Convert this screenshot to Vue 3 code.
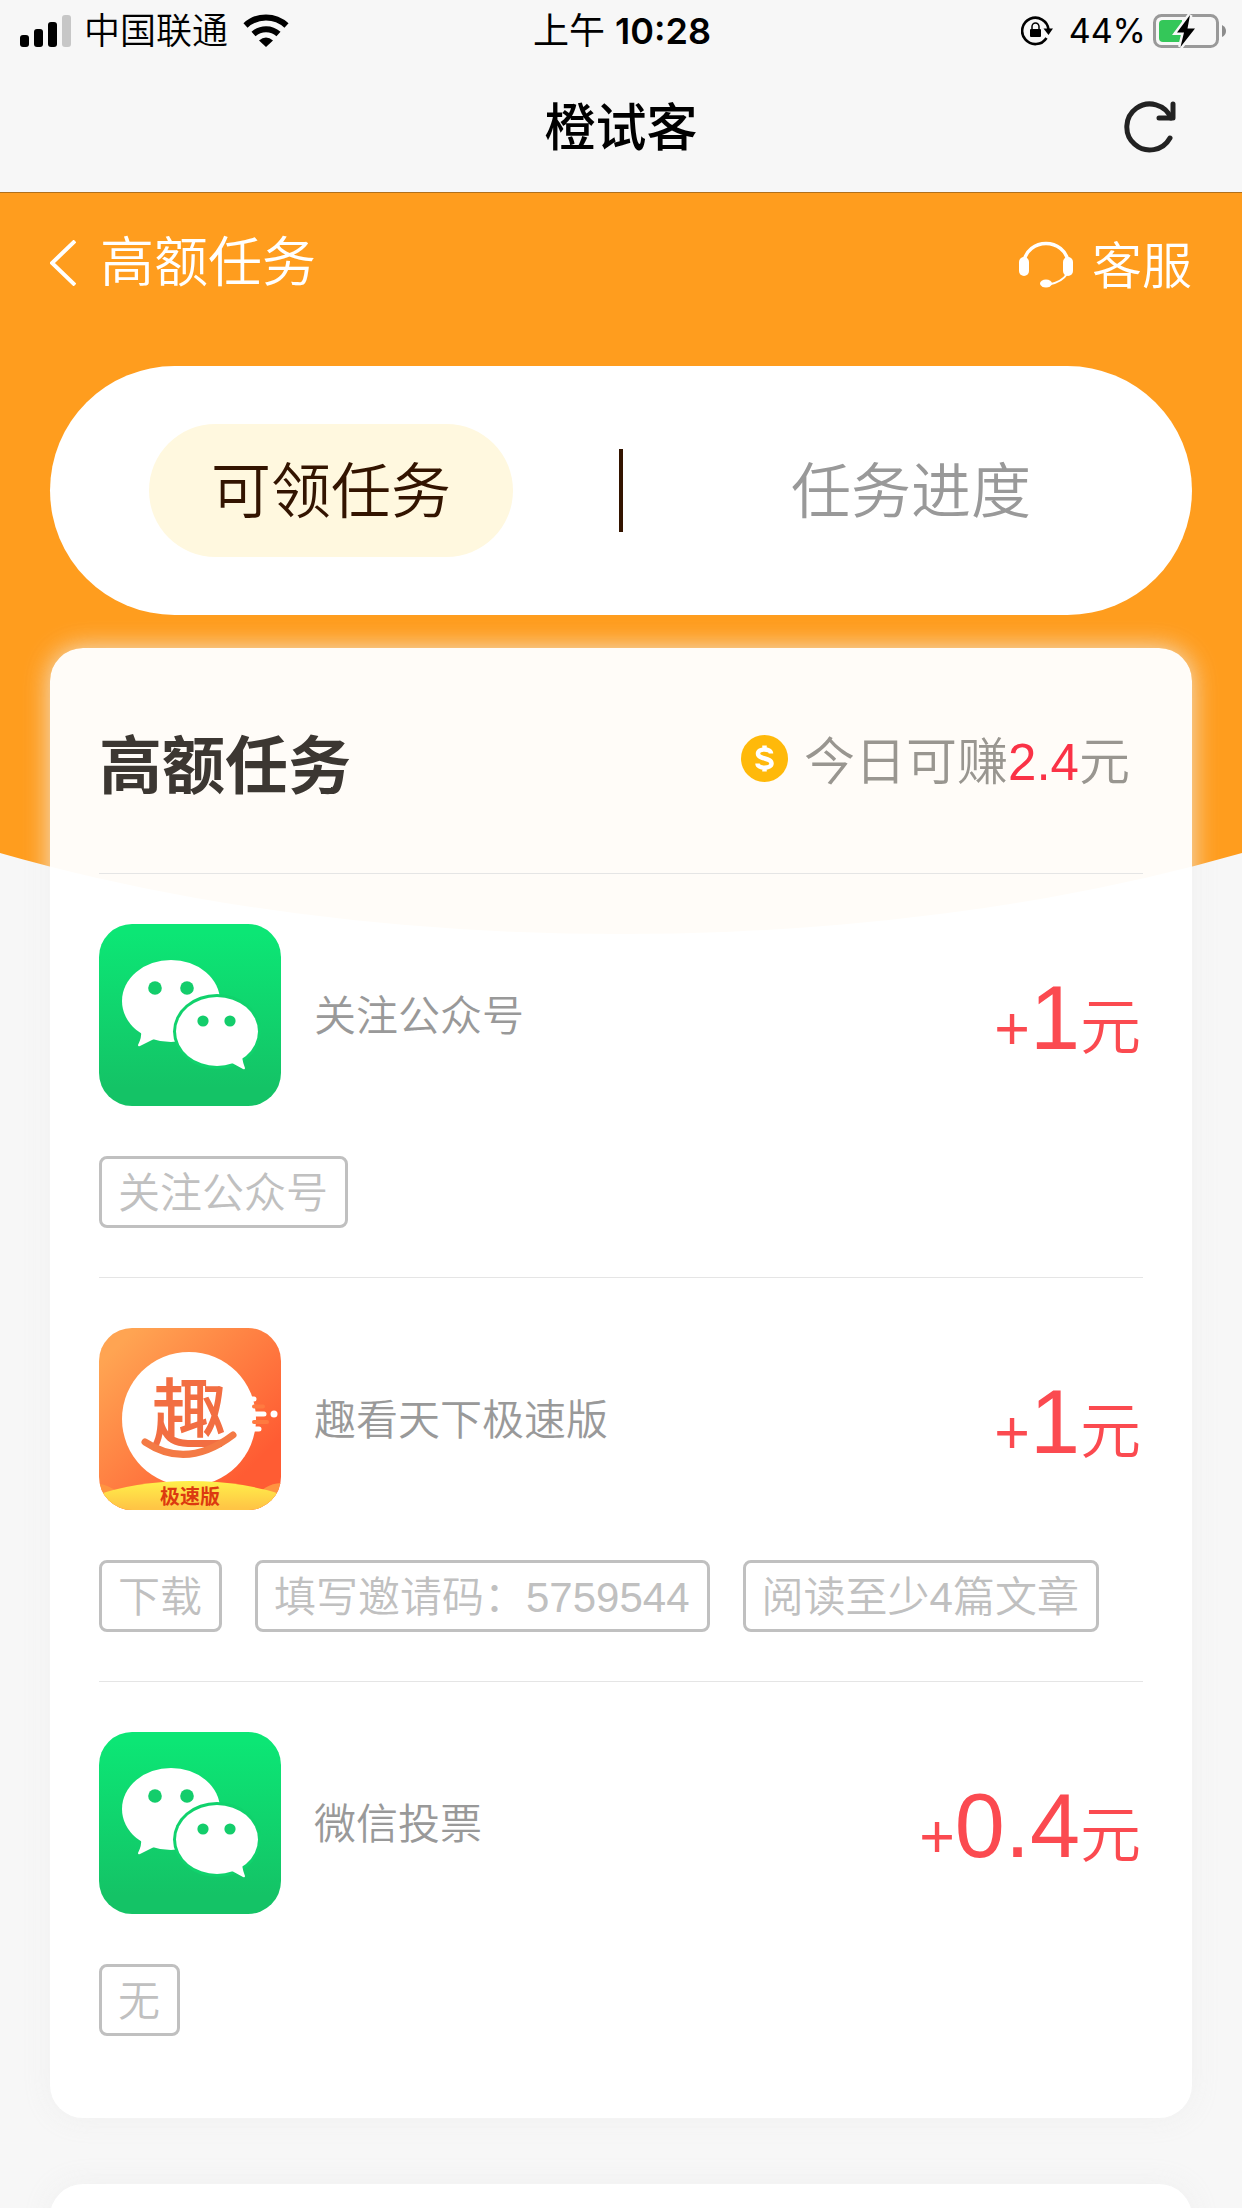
<script setup>
import { ref } from 'vue'

const activeTab = ref('available')
const tabs = [
  { id: 'available', label: '可领任务' },
  { id: 'progress', label: '任务进度' },
]
const tasks = [
  { name: '关注公众号', icon: 'wechat', reward: '1', tags: ['关注公众号'] },
  { name: '趣看天下极速版', icon: 'qu', reward: '1', tags: ['下载', '填写邀请码：5759544', '阅读至少4篇文章'] },
  { name: '微信投票', icon: 'wechat', reward: '0.4', tags: ['无'] },
]
</script>

<template>
  <div class="page">
    <header class="top">
      <div class="status">
        <div class="status-left">
          <svg class="signal" width="51" height="32" viewBox="0 0 51 32" aria-hidden="true">
            <rect x="0" y="20" width="9" height="12" rx="3" />
            <rect x="14" y="14" width="9" height="18" rx="3" />
            <rect x="28" y="7" width="9" height="25" rx="3" />
            <rect x="42" y="0" width="9" height="32" rx="3" fill="#c7c7c7" />
          </svg>
          <span class="carrier">中国联通</span>
          <svg width="46" height="34" viewBox="0 0 46 34" aria-hidden="true">
            <path d="M2.5 11.5A30 30 0 0 1 43.500 11.500" fill="none" stroke="#000" stroke-width="6" />
            <path d="M10.500 20A18.500 18.500 0 0 1 35.500 20" fill="none" stroke="#000" stroke-width="6" />
            <path d="M16 26.500Q23 20.500 30 26.500L23 33Z" />
          </svg>
        </div>
        <div class="clock">上午 <span>10:28</span></div>
        <div class="status-right">
          <svg width="32" height="30" viewBox="0 0 32 30" aria-hidden="true">
            <path d="M25.500 22A13.200 13.200 0 1 1 27.500 13.500" fill="none" stroke="#000" stroke-width="2.600" />
            <path d="M22.500 12.500H32L27.500 19Z" />
            <rect x="9" y="13" width="11" height="8" rx="1" />
            <path d="M11 13.500V10.500A3.500 3.500 0 0 1 18 10.500V13.500" fill="none" stroke="#000" stroke-width="1.500" />
          </svg>
          <span class="percent">44%</span>
          <svg class="battery" width="74" height="34" viewBox="0 0 74 34" aria-hidden="true">
            <rect x="1.500" y="1.500" width="63" height="31" rx="7" fill="none" stroke="#999" stroke-width="3" />
            <path d="M69 11Q73 13 73 17T69 23Z" fill="#8c8c8c" />
            <path d="M10 6H29V28H10Q6 28 6 24V10Q6 6 10 6Z" fill="#34c759" />
            <path d="M37 1L24 18.500H31L27.500 33L42 14.500H34.500Z" stroke="#f7f7f7" stroke-width="5" />
            <path d="M37 1L24 18.500H31L27.500 33L42 14.500H34.500Z" />
          </svg>
        </div>
      </div>
      <div class="title-bar">
        <h1>橙试客</h1>
        <button class="refresh" type="button" aria-label="刷新">
          <svg width="52" height="52" viewBox="0 0 52 52" aria-hidden="true">
            <path d="M46 37A23 23 0 1 1 47 17" />
            <path d="M49 3V17H35" />
          </svg>
        </button>
      </div>
    </header>

    <main class="body">
      <div class="backdrop" aria-hidden="true"></div>

      <nav class="nav">
        <button class="nav-btn back" type="button">
          <svg width="26" height="46" viewBox="0 0 26 46" aria-hidden="true">
            <path d="M25 1L2 23L25 45" fill="none" stroke="#fff" stroke-width="4" />
          </svg>
          <span>高额任务</span>
        </button>
        <button class="nav-btn service" type="button">
          <svg width="54" height="49" viewBox="0 0 54 49" aria-hidden="true">
            <path d="M5 22A22.300 21 0 0 1 49 22" fill="none" stroke="#fff" stroke-width="3.500" />
            <rect x="0" y="18" width="10" height="19" rx="5" fill="#fff" />
            <rect x="44" y="18" width="10" height="19" rx="5" fill="#fff" />
            <path d="M48 35Q43 43 30 45.500" fill="none" stroke="#fff" stroke-width="2" />
            <ellipse cx="27" cy="44.500" rx="6" ry="4" fill="#fff" />
          </svg>
          <span>客服</span>
        </button>
      </nav>

      <div class="tabs" role="tablist">
        <button
          v-for="tab in tabs"
          :key="tab.id"
          type="button"
          role="tab"
          class="tab"
          :class="{ active: activeTab === tab.id }"
          :aria-selected="activeTab === tab.id"
          @click="activeTab = tab.id"
        >{{ tab.label }}</button>
      </div>

      <section class="card">
        <div class="card-head">
          <h2>高额任务</h2>
          <p class="today">
            <svg width="47" height="47" viewBox="0 0 47 47" aria-hidden="true">
              <circle cx="23.500" cy="23.500" r="23.500" fill="#ffb90a" />
              <path d="M30 18.500C30 13 17 13 17 18.500C17 25 30.500 22 30.500 28.500C30.500 34 16.500 34 16.500 28.500M23.500 10.500V14M23.500 32V36.500" fill="none" stroke="#fff" stroke-width="4.500" />
            </svg>
            <span>今日可赚<strong>2.4</strong>元</span>
          </p>
        </div>

        <ul class="tasks">
          <li v-for="task in tasks" :key="task.name" class="task">
            <div class="task-main">
              <svg v-if="task.icon === 'wechat'" class="app-icon" viewBox="0 0 182 182" aria-hidden="true">
                <defs>
                  <linearGradient id="wechat-bg" x1="0" y1="0" x2="0" y2="1">
                    <stop offset="0.050" stop-color="#0ce675" />
                    <stop offset="0.900" stop-color="#14c366" />
                  </linearGradient>
                </defs>
                <rect width="182" height="182" fill="url(#wechat-bg)" />
                <g fill="#fff">
                  <ellipse cx="72" cy="77" rx="49" ry="41" />
                  <path d="M42 107Q43 113 39 121Q39 123 41 122L55 115Z" />
                </g>
                <ellipse cx="118" cy="107.500" rx="44" ry="37.500" fill="#10d26c" />
                <g fill="#fff">
                  <ellipse cx="118" cy="107.500" rx="41" ry="34.500" />
                  <path d="M143 133Q144 139 146 144Q146 146 144 145L133 139Z" />
                </g>
                <g fill="#13cd6b">
                  <circle cx="56" cy="64" r="6.800" />
                  <circle cx="88" cy="64" r="6.800" />
                  <circle cx="104" cy="97" r="5.600" />
                  <circle cx="131" cy="97" r="5.600" />
                </g>
              </svg>
              <svg v-else class="app-icon" viewBox="0 0 182 182" aria-hidden="true">
                <defs>
                  <linearGradient id="qu-bg" x1="0" y1="0" x2="1" y2="1">
                    <stop offset="0.100" stop-color="#ffa452" />
                    <stop offset="0.800" stop-color="#ff5c33" />
                  </linearGradient>
                  <linearGradient id="qu-hill" x1="0" y1="0" x2="0" y2="1">
                    <stop offset="0" stop-color="#fff04a" />
                    <stop offset="0.250" stop-color="#ffc545" />
                  </linearGradient>
                </defs>
                <rect width="182" height="182" fill="url(#qu-bg)" />
                <circle cx="90" cy="91" r="67" fill="#fff" />
                <g fill="none" stroke-linecap="round">
                  <path d="M155 78.500H164M155 94H168" stroke="#ff7a40" stroke-width="4" />
                  <path d="M145 71H155M151 86H165M148 101H160" stroke="#fff" stroke-width="5" />
                </g>
                <circle cx="175" cy="86" r="3.500" fill="#fff" />
                <text x="90" y="114" class="qu-mark">趣</text>
                <path d="M46 114Q88 142 134 107" fill="none" stroke="#f47a45" stroke-width="7" stroke-linecap="round" />
                <path d="M0 156Q20 158 30 182H0ZM182 155Q160 156 150 182H182Z" fill="#ff9440" />
                <ellipse cx="91" cy="207" rx="138" ry="54" fill="url(#qu-hill)" />
                <text x="91" y="176" class="qu-edition">极速版</text>
              </svg>
              <h3>{{ task.name }}</h3>
              <p class="reward">+<strong>{{ task.reward }}</strong>元</p>
            </div>
            <ul class="tags">
              <li v-for="tag in task.tags" :key="tag">{{ tag }}</li>
            </ul>
          </li>
        </ul>
      </section>

      <section class="card next" aria-label="更多任务"></section>
    </main>
  </div>
</template>

<style>
body {
  margin: 0;
  background: #f7f7f7;
}
</style>

<style scoped>
.page {
  height: 100vh;
  overflow: hidden;
  background: #f7f7f7;
  color: #333;
  font-family: "Liberation Sans", "Noto Sans CJK SC", sans-serif;
  font-weight: 350;
}
h1, h2, h3, p, ul {
  margin: 0;
  padding: 0;
}
ul {
  list-style: none;
}
svg {
  flex: none;
  display: block;
}
button {
  border: 0;
  padding: 0;
  background: none;
  font: inherit;
  color: inherit;
  cursor: pointer;
}

.top {
  border-bottom: 1px solid #b0701c;
  color: #000;
}
.status {
  display: grid;
  grid-template-columns: 1fr auto 1fr;
  align-items: center;
  height: 62px;
  padding: 0 15px 0 20px;
  font-family: Inter, "Noto Sans CJK SC", sans-serif;
  font-size: 36px;
  font-weight: 400;
  line-height: 60px;
}
.status-left,
.status-right {
  display: flex;
  align-items: center;
}
.status-right {
  justify-content: flex-end;
}
.carrier {
  margin: 0 15px 0 13px;
  font-weight: 350;
}
.clock {
  padding-right: 3px;
  font-weight: 400;
}
.clock span {
  font-weight: 600;
}
.percent {
  margin: 0 7px 0 16px;
  font-size: 34px;
}
.title-bar {
  display: grid;
  grid-template-columns: 1fr auto 1fr;
  align-items: center;
  height: 130px;
  padding: 0 66px;
}
.title-bar h1 {
  grid-column: 2;
  padding-top: 4px;
  font-size: 51px;
  font-weight: 500;
  line-height: 72px;
}
.refresh {
  justify-self: end;
}
.refresh path {
  fill: none;
  stroke: #222;
  stroke-width: 5;
  stroke-linecap: round;
  stroke-linejoin: round;
}

.body {
  position: relative;
  padding: 0 50px;
}
.backdrop {
  position: absolute;
  top: 0;
  left: -40%;
  width: 180%;
  height: 741px;
  border-radius: 0 0 50% 50% / 0 0 481px 481px;
  background: #ff9d1e;
}
.nav,
.tabs,
.card {
  position: relative;
}
.nav {
  display: flex;
  justify-content: space-between;
  align-items: center;
  height: 140px;
  color: #fff;
}
.nav-btn {
  display: flex;
  align-items: center;
  line-height: 72px;
}
.back {
  gap: 24px;
  font-size: 54px;
}
.service {
  gap: 19px;
  font-size: 50px;
}
.service span {
  padding-top: 8px;
}

.tabs {
  display: flex;
  justify-content: space-between;
  align-items: center;
  height: 249px;
  margin-top: 33px;
  padding: 0 99px;
  border-radius: 125px;
  background: #fff;
}
.tabs::before {
  content: "";
  order: 1;
  width: 4px;
  height: 83px;
  background: #331400;
}
.tab {
  width: 364px;
  height: 133px;
  padding-bottom: 8px;
  border-radius: 67px;
  color: #999;
  font-size: 60px;
}
.tab:last-child {
  order: 2;
}
.tab.active {
  background: #fff8df;
  color: #331400;
}

.card {
  margin-top: 33px;
  padding: 0 49px 33px;
  border-radius: 33px;
  background: rgba(255, 255, 255, 0.97);
  box-shadow: 0 0 26px rgba(238, 238, 238, 0.85);
}
.card.next {
  margin-top: 66px;
  min-height: 200px;
}
.card-head {
  display: flex;
  justify-content: space-between;
  align-items: center;
  height: 225px;
  border-bottom: 1px solid #e5e5e5;
}
.card-head h2 {
  padding-top: 10px;
  color: #3c3732;
  font-size: 63px;
  line-height: 90px;
}
.today {
  display: flex;
  align-items: center;
  gap: 16px;
  padding-right: 13px;
  color: #999690;
  font-size: 51px;
  line-height: 72px;
}
.today svg {
  margin-bottom: 4px;
}
.today span {
  padding-top: 4px;
}
.today strong {
  color: #fa3246;
  font-weight: 400;
}
.task {
  padding: 50px 0 49px;
  border-bottom: 1px solid #e5e5e5;
}
.task:last-child {
  border-bottom: 0;
}
.task-main {
  display: flex;
  align-items: center;
}
.app-icon {
  width: 182px;
  height: 182px;
  border-radius: 33px;
}
.qu-mark {
  fill: #f26e42;
  font-size: 76px;
  font-weight: 500;
  text-anchor: middle;
}
.qu-edition {
  fill: #dc3a10;
  font-size: 20px;
  font-weight: 700;
  text-anchor: middle;
}
.task h3 {
  flex: 1;
  margin-left: 33px;
  padding-top: 4px;
  color: #999;
  font-size: 42px;
  font-weight: 350;
  line-height: 60px;
}
.reward {
  padding: 16px 2px 0 0;
  color: #fb4a50;
  font-size: 61px;
  line-height: 120px;
}
.reward strong {
  font-size: 90px;
  font-weight: 400;
}
.tags {
  display: flex;
  flex-wrap: wrap;
  gap: 33px;
  margin-top: 50px;
}
.tags li {
  padding: 3px 17px 0 16px;
  border: 3px solid #c0c0c0;
  border-radius: 8px;
  color: #c0c0c0;
  font-size: 42px;
  line-height: 63px;
}
</style>
